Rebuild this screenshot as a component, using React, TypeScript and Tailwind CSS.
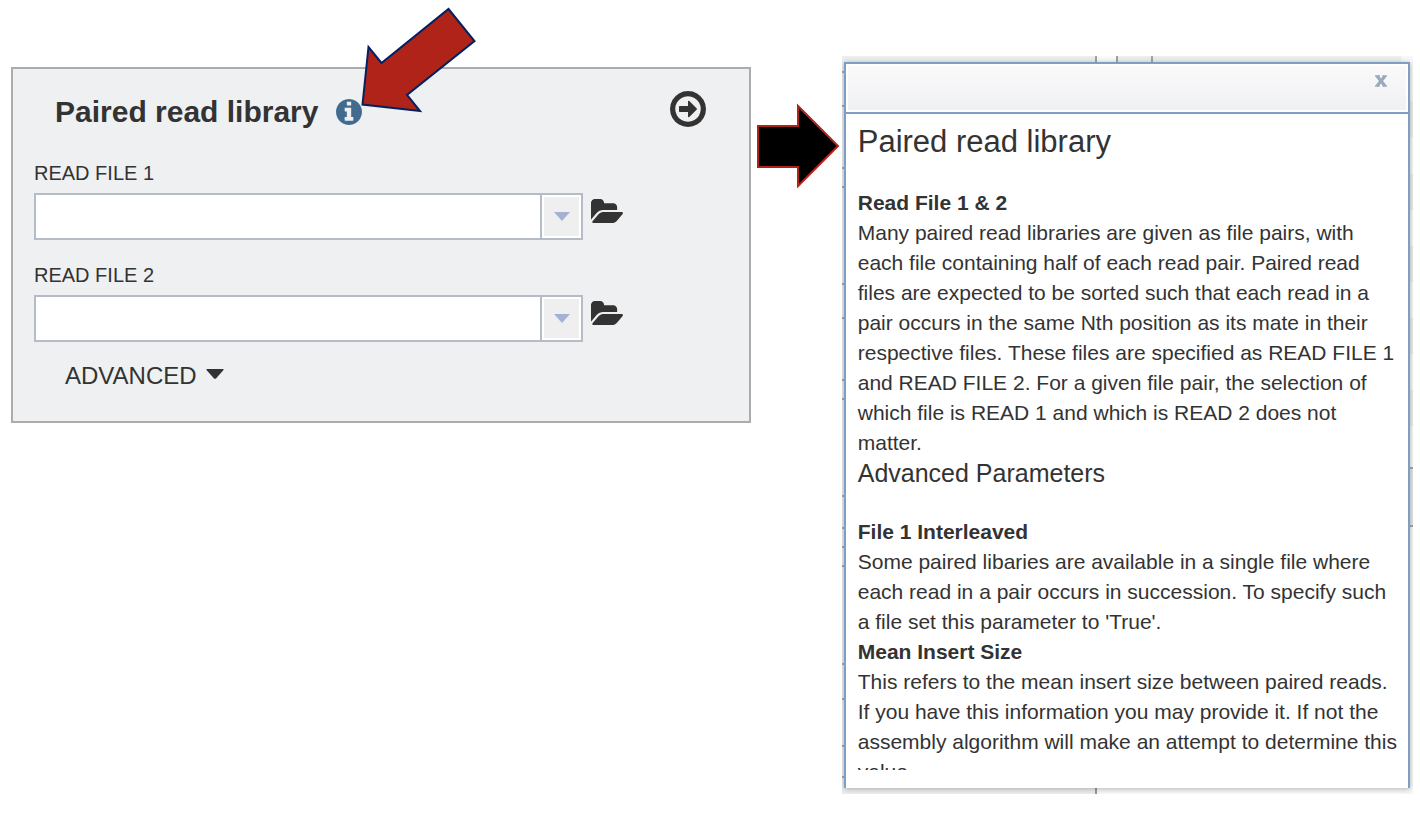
import React from "react";

const LEFT_TICKS = [15, 49, 111, 130, 227, 261, 323, 342, 439, 471, 490, 509, 607, 642, 689, 720];
const TOP_TICKS = [253, 274, 309];
const RIGHT_BANDS = [45, 118, 190, 262, 334];

function InfoIcon() {
  return (
    <svg viewBox="128 128 1536 1536" className="block size-[26px]" fill="currentColor" aria-hidden="true">
      <path d="M1152 1376v-160q0-14-9-23t-23-9h-96v-512q0-14-9-23t-23-9h-320q-14 0-23 9t-9 23v160q0 14 9 23t23 9h96v320h-96q-14 0-23 9t-9 23v160q0 14 9 23t23 9h448q14 0 23-9t9-23zm-128-896v-160q0-14-9-23t-23-9h-192q-14 0-23 9t-9 23v160q0 14 9 23t23 9h192q14 0 23-9t9-23zm640 416q0 209-103 385.5t-279.5 279.5-385.5 103-385.5-103-279.5-279.5-103-385.5 103-385.5 279.5-279.5 385.5-103 385.5 103 279.5 279.5 103 385.5z" />
    </svg>
  );
}

function CircleArrowIcon() {
  return (
    <svg viewBox="128 128 1536 1536" className="block size-9" fill="currentColor" aria-hidden="true">
      <path d="M1280 896q0 14-9 23l-320 320q-9 9-23 9-13 0-22.5-9.5t-9.5-22.5v-192h-352q-13 0-22.5-9.5t-9.5-22.5v-192q0-13 9.5-22.5t22.5-9.5h352v-192q0-14 9-23t23-9q12 0 24 10l319 319q9 9 9 23zm160 0q0-148-73-273t-198-198-273-73-273 73-198 198-73 273 73 273 198 198 273 73 273-73 198-198 73-273zm224 0q0 209-103 385.5t-279.5 279.5-385.5 103-385.5-103-279.5-279.5-103-385.5 103-385.5 279.5-279.5 385.5-103 385.5 103 279.5 279.5 103 385.5z" />
    </svg>
  );
}

function FolderOpenIcon() {
  return (
    <svg viewBox="64 128 1880 1408" className="block h-6 w-8" fill="currentColor" aria-hidden="true">
      <path d="M1943 952q0 31-31 66l-336 396q-43 51-120.5 86.5t-143.5 35.5h-1088q-34 0-60.5-13t-26.5-43q0-31 31-66l336-396q43-51 120.5-86.5t143.5-35.5h1088q34 0 60.5 13t26.5 43zm-343-344v160h-832q-94 0-197 47.5t-164 119.5l-337 396-5 6q0-4-.5-12.5t-.5-12.5v-960q0-92 66-158t158-66h320q92 0 158 66t66 158v32h544q92 0 158 66t66 158z" />
    </svg>
  );
}

function FileField({ id, label }: { id: string; label: string }) {
  return (
    <div>
      <label htmlFor={id} className="block text-xl leading-7">
        {label}
      </label>
      <div className="mt-[6px] flex items-start gap-2">
        <div className="flex h-[47px] w-[549px] border-2 border-[#b5bcc7] bg-white">
          <input id={id} type="text" className="min-w-0 flex-1 bg-white px-2 text-xl outline-none" />
          <button
            type="button"
            aria-label={`Show choices for ${label}`}
            className="flex w-[41px] items-center justify-center border-l-2 border-[#b5bcc7] bg-[#efefef] inset-ring-2 inset-ring-white"
          >
            <svg viewBox="0 0 16 9" className="h-[9px] w-4" fill="#a3b1d3" aria-hidden="true">
              <path d="M0 0h16L8 9z" />
            </svg>
          </button>
        </div>
        <button type="button" aria-label={`Browse for ${label}`} className="mt-[6px]">
          <FolderOpenIcon />
        </button>
      </div>
    </div>
  );
}

function LibraryPanel() {
  return (
    <section className="relative mt-[67px] w-[52.5%] shrink-0 border-2 border-[#acacac] bg-[#eff0f2] pt-[22px] pr-[43px] pb-[27px] pl-[21px]">
      <div className="flex items-start pl-[21px]">
        <h1 className="text-[30px] leading-[42px] font-bold">Paired read library</h1>
        <button type="button" aria-label="About paired read library" className="mt-2 ml-[18px] text-[#436b8f]">
          <InfoIcon />
        </button>
        <button type="button" aria-label="Add library" className="ml-auto">
          <CircleArrowIcon />
        </button>
      </div>
      <div className="mt-[26px] flex flex-col gap-[21px]">
        <FileField id="read-file-1" label="READ FILE 1" />
        <FileField id="read-file-2" label="READ FILE 2" />
      </div>
      <button type="button" className="mt-4 ml-[31px] flex items-center gap-[9px] text-2xl leading-9">
        ADVANCED
        <svg viewBox="0 0 18 10" className="mb-1 h-[10px] w-[18px]" fill="currentColor" aria-hidden="true">
          <path d="M1 0h16q1 0 .5 1L10 9.4q-1 .9-2 0L.5 1Q0 0 1 0z" />
        </svg>
      </button>
      <svg viewBox="0 0 118 108" className="absolute top-[-63px] left-[347px] h-[108px] w-[118px]" aria-hidden="true">
        <path
          d="M88.5 3L114.500 35L47 89L60 105L2.500 98.500L8.500 41L21.500 57z"
          fill="#b02318"
          stroke="#04215f"
          strokeWidth="2"
        />
      </svg>
    </section>
  );
}

function StepArrow() {
  return (
    <svg viewBox="0 0 84 88" className="mt-[102px] ml-[5px] h-[88px] w-[84px] shrink-0" aria-hidden="true">
      <path d="M2 24H42V4L82 44L42 84V65H2z" fill="#000" stroke="#b02318" strokeWidth="2" />
    </svg>
  );
}

function PageEdges() {
  return (
    <div aria-hidden="true">
      <span className="absolute top-0 left-[255px] h-full w-[19px] bg-[#fbfbfb]" />
      <span className="absolute right-0 bottom-0 left-[255px] h-4 bg-[#fafafa]" />
      <span className="absolute top-0 right-0 h-full w-3 bg-[#f9f9fa]" />
      {RIGHT_BANDS.map((top) => (
        <span key={top} className="absolute right-0 h-9 w-3 bg-[#eeeeef]" style={{ top }} />
      ))}
      <span className="absolute top-[411px] right-0 h-[60px] w-3 border-y-2 border-[#a9a9a9] bg-[#e6e7ea]" />
      {LEFT_TICKS.map((top) => (
        <span key={top} className="absolute left-0 h-[2px] w-2 bg-[#a9acb0]" style={{ top }} />
      ))}
      {TOP_TICKS.map((left) => (
        <span key={left} className="absolute top-0 h-3 w-[2px] bg-[#a3a3a3]" style={{ left }} />
      ))}
      <span className="absolute bottom-0 left-[253px] h-3 w-[2px] bg-[#999]" />
    </div>
  );
}

function HelpDialog() {
  return (
    <div className="relative mt-14 mr-[7px] ml-[2px] min-w-0 flex-1 overflow-hidden bg-[#eeeff1] pt-[6px] pr-[3px] pb-[6px] pl-[2px]">
      <PageEdges />
      <div
        role="dialog"
        aria-labelledby="help-title"
        className="relative border-x-2 border-t-2 border-[#7c9fc3] bg-white pb-[18px] shadow-[0_1px_6px_rgba(0,0,0,0.3)]"
      >
        <div className="flex h-[50px] items-start justify-end border-b-2 border-[#7c9fc3] bg-linear-to-b from-[#fafafb] to-[#eff0f2] pt-[11px] pr-5 inset-ring-2 inset-ring-white">
          <button type="button" aria-label="Close" className="block">
            <svg viewBox="0 0 14 12" className="h-3 w-[14px]" aria-hidden="true">
              <path d="M3 1L11 11M11 1L3 11" stroke="#9aaaba" strokeWidth="3.200" />
              <path d="M1 1h5M8.500 1H13M1 11h4.500M8.500 11H13" stroke="#9aaaba" strokeWidth="1.500" />
            </svg>
          </button>
        </div>
        <div className="h-[656px] overflow-hidden pr-2 pl-3 text-[21px] leading-[30px]">
          <h2 id="help-title" className="pt-2 pb-[26px] text-[31px] leading-10">
            Paired read library
          </h2>
          <h4 className="font-bold">Read File 1 &amp; 2</h4>
          <p>
            Many paired read libraries are given as file pairs, with each file containing half of each read pair. Paired
            read files are expected to be sorted such that each read in a pair occurs in the same Nth position as its
            mate in their respective files. These files are specified as READ FILE 1 and READ FILE 2. For a given file
            pair, the selection of which file is READ 1 and which is READ 2 does not matter.
          </p>
          <h3 className="pb-[29px] text-[25px]">Advanced Parameters</h3>
          <h4 className="font-bold">File 1 Interleaved</h4>
          <p>
            Some paired libaries are available in a single file where each read in a pair occurs in succession. To
            specify such a file set this parameter to 'True'.
          </p>
          <h4 className="font-bold">Mean Insert Size</h4>
          <p>
            This refers to the mean insert size between paired reads. If you have this information you may provide it.
            If not the assembly algorithm will make an attempt to determine this value.
          </p>
        </div>
      </div>
    </div>
  );
}

export default function App() {
  return (
    <main className="flex min-h-screen items-start bg-white pl-[11px] font-['Liberation_Sans',Arial,sans-serif] text-[#333]">
      <LibraryPanel />
      <StepArrow />
      <HelpDialog />
    </main>
  );
}
